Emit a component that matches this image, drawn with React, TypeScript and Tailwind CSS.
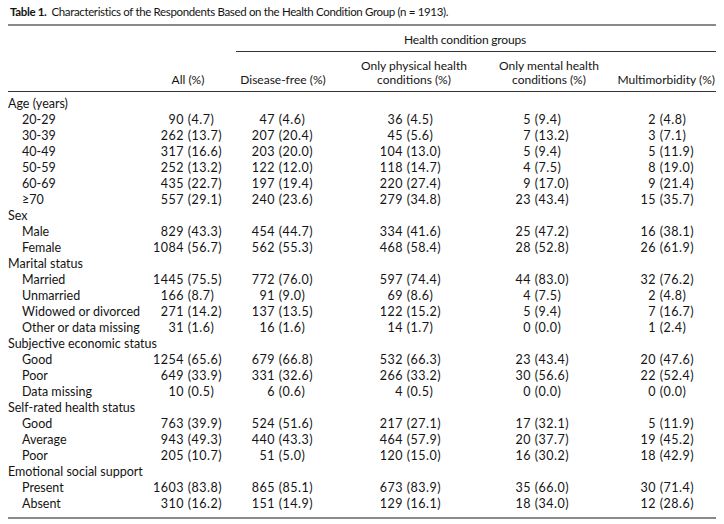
import React from 'react';

type Row = { label: string; values?: string[][]; group?: boolean };

const rows: Row[] = [
  { label: 'Age (years)', group: true },
  { label: '20-29', values: [['90', '4.7'], ['47', '4.6'], ['36', '4.5'], ['5', '9.4'], ['2', '4.8']] },
  { label: '30-39', values: [['262', '13.7'], ['207', '20.4'], ['45', '5.6'], ['7', '13.2'], ['3', '7.1']] },
  { label: '40-49', values: [['317', '16.6'], ['203', '20.0'], ['104', '13.0'], ['5', '9.4'], ['5', '11.9']] },
  { label: '50-59', values: [['252', '13.2'], ['122', '12.0'], ['118', '14.7'], ['4', '7.5'], ['8', '19.0']] },
  { label: '60-69', values: [['435', '22.7'], ['197', '19.4'], ['220', '27.4'], ['9', '17.0'], ['9', '21.4']] },
  { label: '≥70', values: [['557', '29.1'], ['240', '23.6'], ['279', '34.8'], ['23', '43.4'], ['15', '35.7']] },
  { label: 'Sex', group: true },
  { label: 'Male', values: [['829', '43.3'], ['454', '44.7'], ['334', '41.6'], ['25', '47.2'], ['16', '38.1']] },
  { label: 'Female', values: [['1084', '56.7'], ['562', '55.3'], ['468', '58.4'], ['28', '52.8'], ['26', '61.9']] },
  { label: 'Marital status', group: true },
  { label: 'Married', values: [['1445', '75.5'], ['772', '76.0'], ['597', '74.4'], ['44', '83.0'], ['32', '76.2']] },
  { label: 'Unmarried', values: [['166', '8.7'], ['91', '9.0'], ['69', '8.6'], ['4', '7.5'], ['2', '4.8']] },
  { label: 'Widowed or divorced', values: [['271', '14.2'], ['137', '13.5'], ['122', '15.2'], ['5', '9.4'], ['7', '16.7']] },
  { label: 'Other or data missing', values: [['31', '1.6'], ['16', '1.6'], ['14', '1.7'], ['0', '0.0'], ['1', '2.4']] },
  { label: 'Subjective economic status', group: true },
  { label: 'Good', values: [['1254', '65.6'], ['679', '66.8'], ['532', '66.3'], ['23', '43.4'], ['20', '47.6']] },
  { label: 'Poor', values: [['649', '33.9'], ['331', '32.6'], ['266', '33.2'], ['30', '56.6'], ['22', '52.4']] },
  { label: 'Data missing', values: [['10', '0.5'], ['6', '0.6'], ['4', '0.5'], ['0', '0.0'], ['0', '0.0']] },
  { label: 'Self-rated health status', group: true },
  { label: 'Good', values: [['763', '39.9'], ['524', '51.6'], ['217', '27.1'], ['17', '32.1'], ['5', '11.9']] },
  { label: 'Average', values: [['943', '49.3'], ['440', '43.3'], ['464', '57.9'], ['20', '37.7'], ['19', '45.2']] },
  { label: 'Poor', values: [['205', '10.7'], ['51', '5.0'], ['120', '15.0'], ['16', '30.2'], ['18', '42.9']] },
  { label: 'Emotional social support', group: true },
  { label: 'Present', values: [['1603', '83.8'], ['865', '85.1'], ['673', '83.9'], ['35', '66.0'], ['30', '71.4']] },
  { label: 'Absent', values: [['310', '16.2'], ['151', '14.9'], ['129', '16.1'], ['18', '34.0'], ['12', '28.6']] },
];

// width of the right-aligned count box in each column, so the "(" lines up
const countWidths = ['w-[44px]', 'w-[39px]', 'w-[73px]', 'w-[33px]', 'w-[56px]'];

const cols = 'grid grid-cols-[132px_96px_94px_168px_102px_116px]';

export default function App() {
  return (
    <div className="w-[724px] h-[524px] bg-white text-[#141414] font-['Lato','Liberation_Sans',sans-serif] text-[12px] px-[8px]">
      {/* Title */}
      <div className="pt-[4px] pl-[2px] leading-[16px] h-[20px] text-[11.5px] tracking-[-0.35px]">
        <span className="font-bold">Table 1.</span>
        <span className="ml-[5px]">
          Characteristics of the Respondents Based on the Health Condition Group (n = 1913).
        </span>
      </div>
      <div className="mt-[4px] h-[2px] bg-[#8a8a8a]" />

      {/* Header */}
      <div className={cols}>
        <div />
        <div />
        <div className="col-span-4 pt-[6px] pb-[3px] pr-[22px] leading-[16px] text-center border-b border-[#333] tracking-[-0.2px]">
          Health condition groups
        </div>
      </div>
      <div className={`${cols} items-end border-b border-[#333] pt-[7px] pb-[4px] leading-[14px] text-center`}>
        <div />
        <div>All (%)</div>
        <div>Disease-free (%)</div>
        <div>
          Only physical health
          <br />
          conditions (%)
        </div>
        <div>
          Only mental health
          <br />
          conditions (%)
        </div>
        <div className="text-right pr-[1px]">Multimorbidity (%)</div>
      </div>

      {/* Body */}
      <div className="pt-[4px] pb-[5px] border-b-2 border-[#8a8a8a] text-[12.5px]">
        {rows.map((row, i) => (
          <div key={i} className={`${cols} h-[16px] leading-[16px]`}>
            <div className={row.group ? 'whitespace-nowrap' : 'pl-[14px] whitespace-nowrap'}>{row.label}</div>
            {row.values
              ? row.values.map((v, j) => (
                  <div key={j} className="whitespace-nowrap tracking-[0.5px]">
                    <span className={`inline-block text-right ${countWidths[j]}`}>{v[0]}</span> ({v[1]})
                  </div>
                ))
              : null}
          </div>
        ))}
      </div>
    </div>
  );
}
